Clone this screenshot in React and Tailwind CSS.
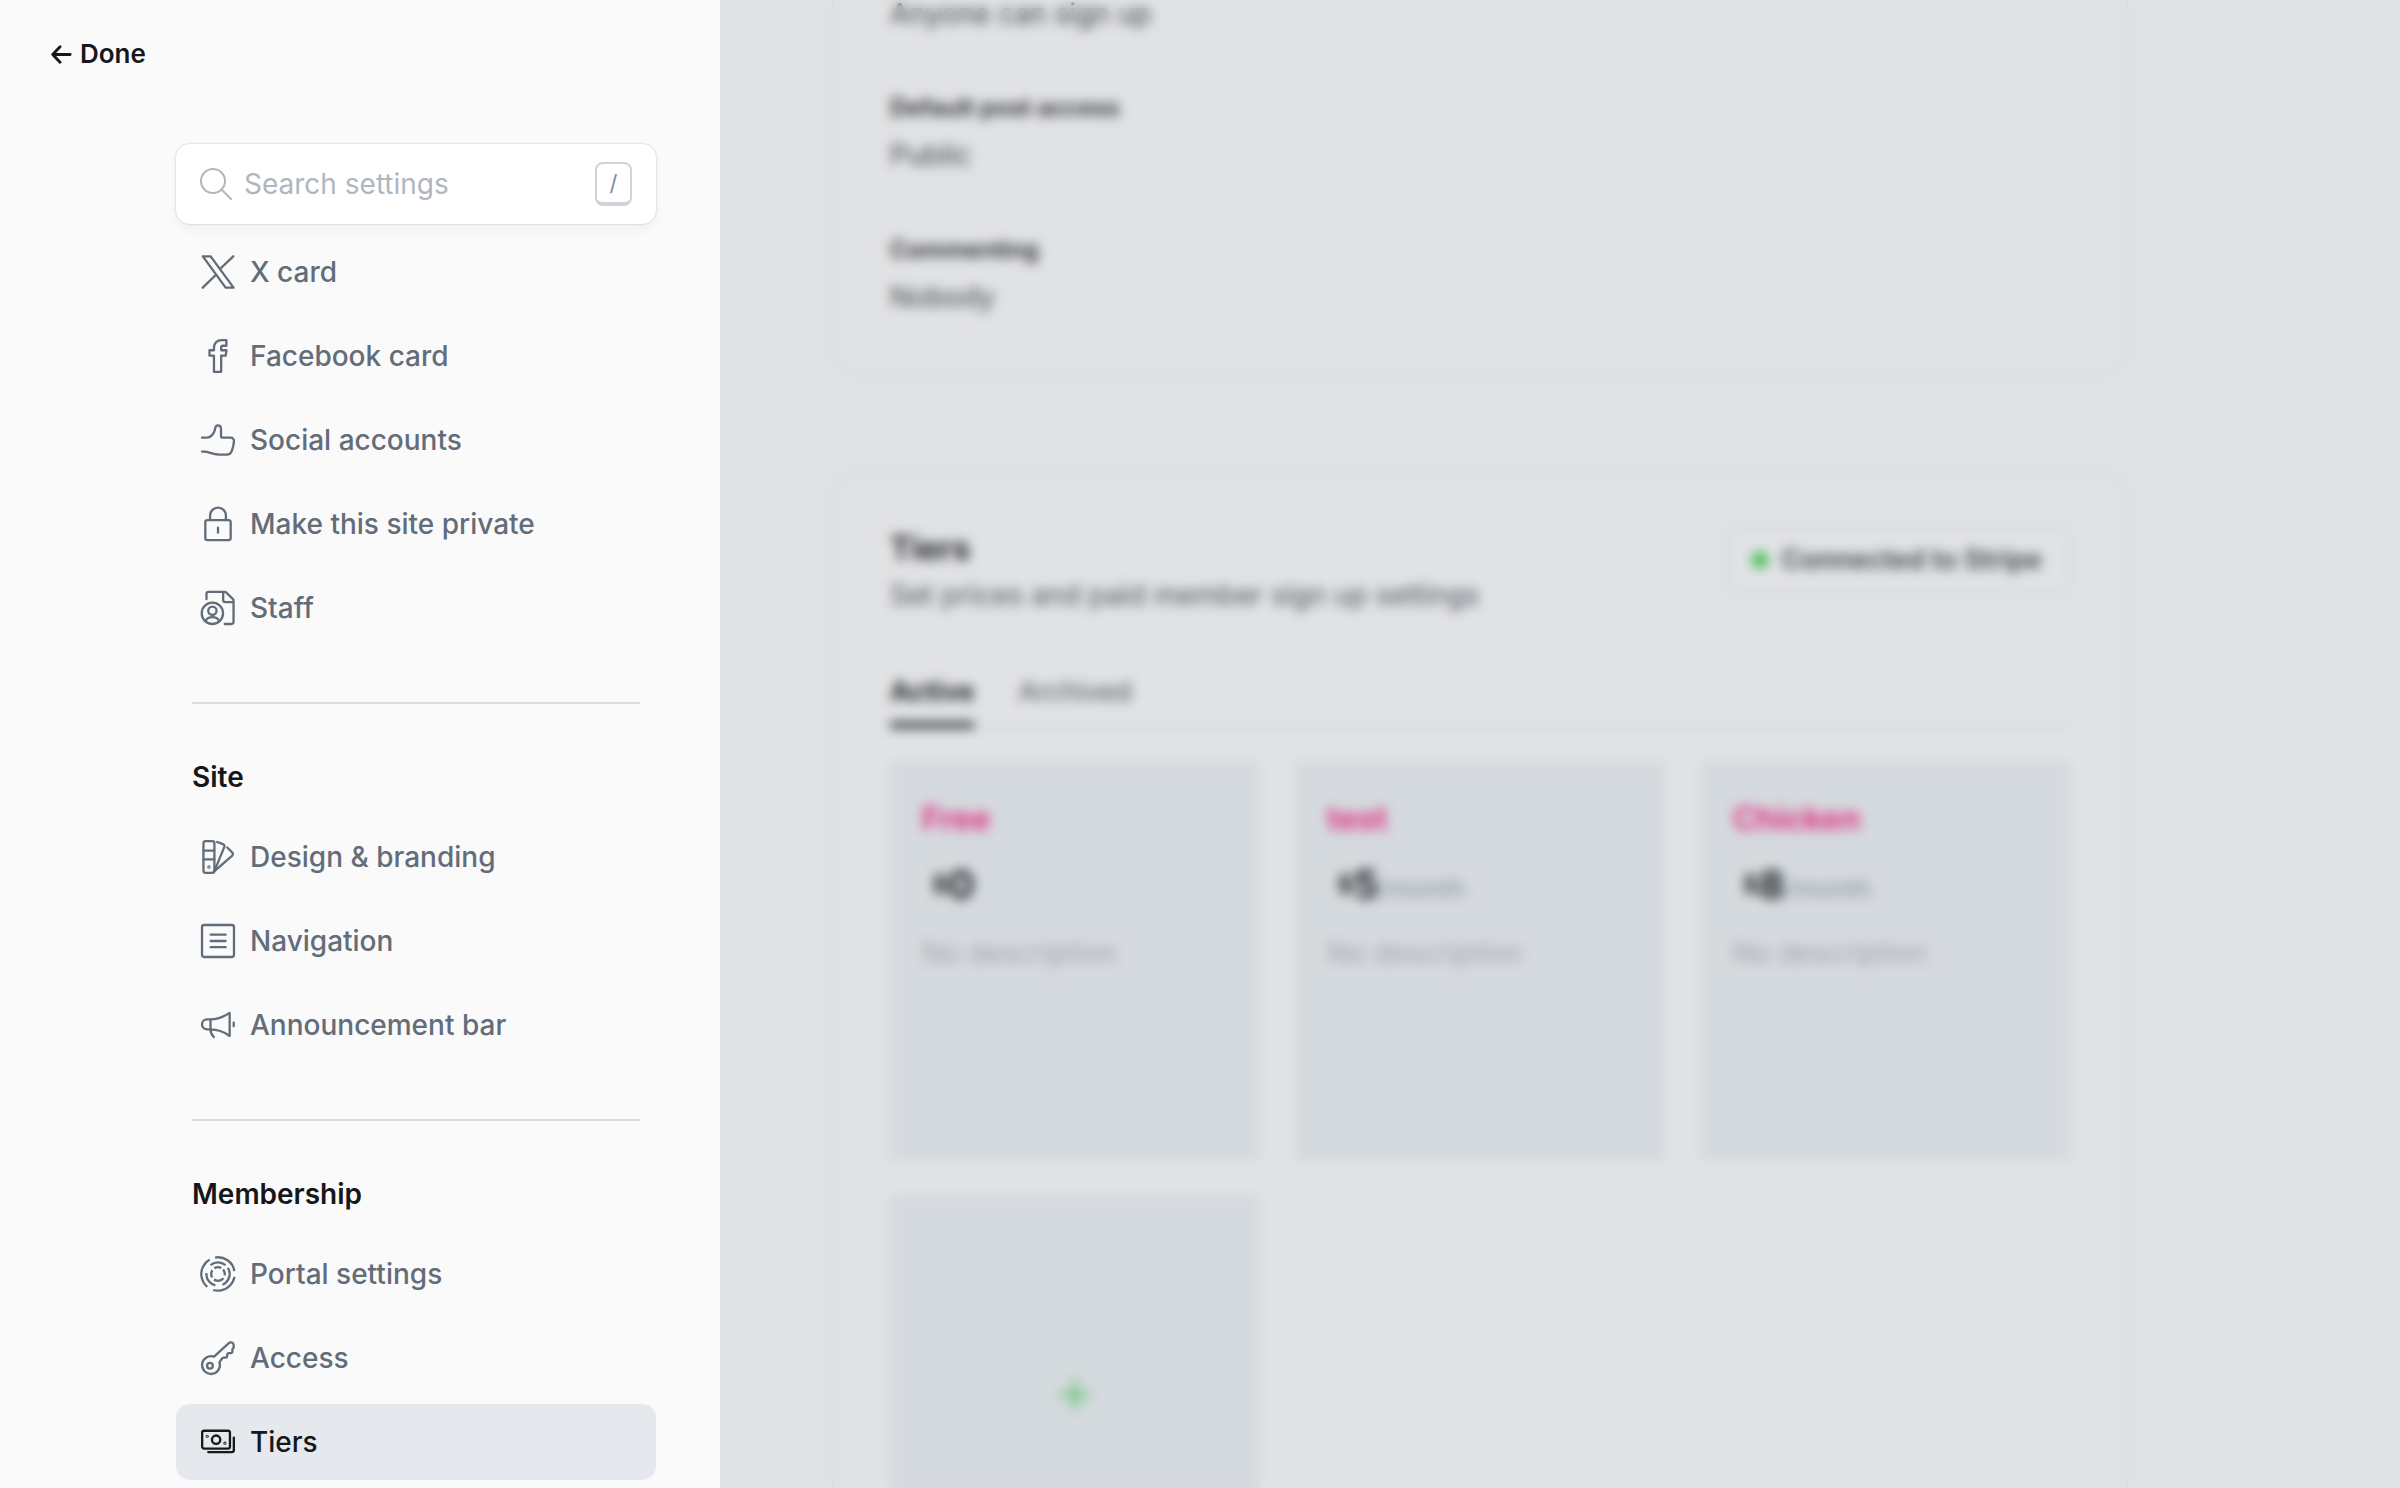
const icons = {
  x: (
    <>
      <path d="M1.5 1.1h5.4l15.9 21.8h-5.5z" />
      <path d="M22.6 1.1 13.4 9.9M1.4 22.9l9.2-9" />
    </>
  ),
  facebook: (
    <path d="M17.8 1h-3.3C11.5 1 9.2 3 9.2 6v2H6.1v3.8h3.1V23h5V11.8h3.1l.6-3.8h-3.7V6.3c0-.8.5-1.4 1.4-1.4h2.2z" />
  ),
  thumb: (
    <path d="M.9 10.4h3.2c3.4 0 5.6-3.6 6-6.6.2-1.3.8-2 1.8-2 1.4 0 2.2 1.1 2.2 2.6v4.8c0 .7.4 1.2 1.2 1.2h5.5c1.4 0 2.4 1.1 2.3 2.6-.2 2.4-.8 4.6-1.5 6.6-.6 1.7-1.9 2.6-3.6 2.6-2.8 0-6 0-8.9-.6-2.6-.6-4.6-1.5-6.6-1.5H.9" />
  ),
  lock: (
    <>
      <rect x="3.2" y="9.3" width="17.6" height="13.9" rx="1.5" />
      <path d="M6.5 9.3V6.1a5.5 5.5 0 0 1 11 0v3.2M12 14.6v3.4" />
    </>
  ),
  staff: (
    <>
      <circle cx="8.1" cy="15.7" r="7.4" />
      <circle cx="8.1" cy="13.9" r="2.9" />
      <path d="M3.3 21.1c1-1.8 2.8-2.7 4.8-2.7s3.8.9 4.8 2.7" />
      <path d="M4 5.9V2.3C4 1.4 4.6.8 5.5.8h11.1c.4 0 .8.1 1 .4l4.8 4.6c.3.3.4.7.4 1v14.8c0 .9-.6 1.5-1.5 1.5h-4.6M15.6.8v5.6c0 .9.6 1.5 1.5 1.5h5.6" />
    </>
  ),
  swatches: (
    <>
      <rect x="1.9" y="1" width="7.6" height="22" rx="1.5" />
      <path d="M1.9 7.6h7.6M1.9 13.6h7.6" />
      <path d="M11.4 1.6l4.1 1.5c.8.3 1.2 1.1.9 1.9L9.5 21.8" />
      <path d="M18.4 5.4l3.5 3.5c.6.6.6 1.5 0 2.1L9 22.4" />
      <circle cx="5.7" cy="19" r=".4" />
    </>
  ),
  list: (
    <>
      <rect x=".9" y=".9" width="22.2" height="22.2" rx="1.5" />
      <path d="M6.9 7.6h10.4M6.9 12h10.4M6.9 16.3h10.4" />
    </>
  ),
  megaphone: (
    <path d="M6.8 8.1H4.4a3.5 3.5 0 0 0 0 7h2.4zM6.8 8.1c5 0 9.3-1.9 13.3-4.5v16c-4-2.8-8.3-4.5-13.3-4.5M22.9 10.3v2.6M6.8 15.1c0 2.2.9 3.8 2.3 5.2" />
  ),
  portal: (
    <>
      <circle cx="12" cy="12" r="11.6" pathLength="360" strokeDasharray="90 20 97 23 110 20" strokeLinecap="butt" transform="rotate(-100 12 12)" />
      <circle cx="12" cy="12" r="8.1" pathLength="360" strokeDasharray="80 18 100 35 82 45" strokeLinecap="butt" transform="rotate(-130 12 12)" />
      <circle cx="12" cy="12" r="4.7" pathLength="360" strokeDasharray="55 20 55 25 90 25 65 25" strokeLinecap="butt" transform="rotate(-115 12 12)" />
    </>
  ),
  key: (
    <>
      <path d="M9.3 11.1 19.3 1.9c1-1 2.6-.9 3.3.2.3.5.3 1 .3 1.6v.9c0 .6-.9.9-.9 1.500v1.2c0 .8-.5 1.3-1.3 1.3h-1c-.8 0-1.3.5-1.3 1.3v.6c0 .8-.5 1.3-1.3 1.3h-1c-.5 0-.8.1-1.1.4l-2 2.7a6.200 6.200 0 1 1-3.700-3.800z" />
      <circle cx="6.4" cy="17.4" r="2" />
    </>
  ),
  cash: (
    <>
      <rect x="1" y="4.2" width="19.3" height="12.4" rx="1.4" />
      <circle cx="10.7" cy="10.4" r="2.9" />
      <path d="M23 8.9v8.6c0 .9-.6 1.5-1.5 1.5H5.2" />
      <circle cx="4.500" cy="8" r=".3" />
      <circle cx="16.8" cy="12.8" r=".3" />
    </>
  ),
};

function Icon({ name }) {
  return (
    <svg viewBox="-0.5 -0.5 25 25" className="size-9 shrink-0" fill="none" stroke="currentColor" strokeWidth="1.6" strokeLinecap="round" strokeLinejoin="round" aria-hidden="true">
      {icons[name]}
    </svg>
  );
}

function NavItem({ icon, label, active }) {
  return (
    <li>
      <button
        type="button"
        aria-current={active ? "page" : undefined}
        className={
          active
            ? "flex h-[76px] w-full items-center gap-[14px] rounded-[14px] bg-[#e5e8ed] pl-6 text-left text-[28px] font-medium text-[#15171a]"
            : "flex h-[76px] w-full items-center gap-[14px] rounded-[14px] pl-6 text-left text-[28px] font-medium text-[#626d79]"
        }
      >
        <Icon name={icon} />
        {label}
      </button>
    </li>
  );
}

function NavGroup({ title, items }) {
  return (
    <section>
      {title && <h2 className="mt-[55px] mb-6 ml-4 text-[28px] leading-9 font-semibold text-[#15171a]">{title}</h2>}
      <ul className="flex flex-col gap-2">
        {items.map((item) => (
          <NavItem key={item.label} {...item} />
        ))}
      </ul>
    </section>
  );
}

const Divider = () => <hr className="mx-4 mt-14 border-t-2 border-[#dbdfe3]" />;

function Sidebar() {
  return (
    <aside className="h-full w-[720px] shrink-0 overflow-hidden bg-[#fafafa]">
      <button type="button" className="mt-9 ml-[50px] flex items-center gap-[7px] text-[26px] leading-9 font-semibold text-[#15171a]">
        <svg viewBox="0 0 24 24" className="size-[23px]" fill="none" stroke="currentColor" strokeWidth="3" strokeLinecap="round" strokeLinejoin="round" aria-hidden="true">
          <path d="M21 12H3M10.5 4 2.8 12l7.7 8" />
        </svg>
        Done
      </button>
      <div className="mt-18 pr-16 pl-44">
        <label className="mb-[10px] flex h-20 items-center rounded-[14px] bg-white px-6 shadow-[0_0_2px_rgba(0,0,0,0.25),0_6px_12px_rgba(0,0,0,0.04)]">
          <svg viewBox="0 0 32 32" className="size-8 shrink-0 text-[#aeb7c1]" fill="none" stroke="currentColor" strokeWidth="2" strokeLinecap="round" aria-hidden="true">
            <circle cx="13" cy="13" r="12" />
            <path d="M22 22l9 9" />
          </svg>
          <input type="text" aria-label="Search settings" placeholder="Search settings" className="ml-3 min-w-0 flex-1 text-[28px] text-[#15171a] outline-none placeholder:text-[#aeb7c1]" />
          <kbd className="flex h-11 w-[37px] items-center justify-center rounded-[8px] border-2 border-b-4 border-[#ced4d9] font-[Inter] text-[22px] text-[#7c8b9a]">/</kbd>
        </label>
        <nav>
          <NavGroup
            items={[
              { icon: "x", label: "X card" },
              { icon: "facebook", label: "Facebook card" },
              { icon: "thumb", label: "Social accounts" },
              { icon: "lock", label: "Make this site private" },
              { icon: "staff", label: "Staff" },
            ]}
          />
          <Divider />
          <NavGroup
            title="Site"
            items={[
              { icon: "swatches", label: "Design & branding" },
              { icon: "list", label: "Navigation" },
              { icon: "megaphone", label: "Announcement bar" },
            ]}
          />
          <Divider />
          <NavGroup
            title="Membership"
            items={[
              { icon: "portal", label: "Portal settings" },
              { icon: "key", label: "Access" },
              { icon: "cash", label: "Tiers", active: true },
            ]}
          />
        </nav>
      </div>
    </aside>
  );
}

function TierCard({ name, price, period }) {
  return (
    <article className="h-[400px] bg-[#f1f5f8] px-8 pt-[38px]">
      <h3 className="text-[32px] leading-10 font-bold text-[#fb2d8d]">{name}</h3>
      <p className="mt-[26px] flex h-10 items-center pl-[10px] text-[#15171a]">
        <span className="text-[24px] leading-10 font-bold">$</span>
        <span className="text-[40px] leading-10 font-bold">{price}</span>
        {period && <span className="pt-2 text-[26px] leading-8 text-[#95a1ad]">{period}</span>}
      </p>
      <p className="mt-7 text-[28px] leading-10 text-[#b1b5ba]">No description</p>
    </article>
  );
}

function Content() {
  return (
    <main className="relative h-full min-w-0 flex-1 overflow-hidden bg-white">
      <div className="max-w-[1408px] pl-28">
        <section className="rounded-b-[24px] border-2 border-t-0 border-[#ebeef0] px-14 pb-[62px] text-[28px] leading-7 text-[#394047]">
          <p>Anyone can sign up</p>
          <h3 className="mt-[66px] text-[24px] font-semibold text-[#15171a]">Default post access</h3>
          <p className="mt-[19px]">Public</p>
          <h3 className="mt-[67px] text-[24px] font-semibold text-[#15171a]">Commenting</h3>
          <p className="mt-[19px]">Nobody</p>
        </section>
        <section className="mt-24 rounded-[24px] border-2 border-[#ebeef0] px-14 pt-[53px] pb-14">
          <header className="flex items-start justify-between">
            <div>
              <h2 className="mt-[3px] text-[32px] leading-10 font-bold text-[#15171a]">Tiers</h2>
              <p className="mt-[6px] text-[28px] leading-10 text-[#4b535c]">Set prices and paid member sign up settings</p>
            </div>
            <button type="button" className="flex h-[68px] items-center gap-[14px] rounded-[8px] border-2 border-[#e6e9ee] pr-[26px] pl-6 text-[27px] font-semibold text-[#394047]">
              <span className="size-4 rounded-full bg-[#30cf43]" />
              Connected to Stripe
            </button>
          </header>
          <div role="tablist" className="mt-[59px] flex gap-11 border-b-2 border-[#e1e8ed] text-[27px] leading-9">
            <button type="button" role="tab" aria-selected="true" className="-mb-0.5 border-b-6 border-[#15171a] pb-3 font-bold text-[#15171a]">Active</button>
            <button type="button" role="tab" aria-selected="false" className="-mb-0.5 border-b-6 border-transparent pb-3 text-[#4b535c]">Archived</button>
          </div>
          <div className="mt-[33px] grid grid-cols-3 gap-x-9 gap-y-[34px]">
            <TierCard name="Free" price="0" />
            <TierCard name="test" price="5" period="/month" />
            <TierCard name="Chicken" price="8" period="/month" />
            <button type="button" aria-label="Add tier" className="flex h-[400px] items-center justify-center bg-[#f1f5f8] text-[#30cf43]">
              <svg viewBox="0 0 32 32" className="size-8" fill="none" stroke="currentColor" strokeWidth="3" aria-hidden="true">
                <path d="M16 0v32M0 16h32" />
              </svg>
            </button>
          </div>
        </section>
      </div>
      <div className="absolute inset-0 bg-[#61646e]/19 backdrop-blur-[6px]" />
    </main>
  );
}

export default function App() {
  return (
    <div className="flex h-screen overflow-hidden font-[Inter,sans-serif]">
      <Sidebar />
      <Content />
    </div>
  );
}
